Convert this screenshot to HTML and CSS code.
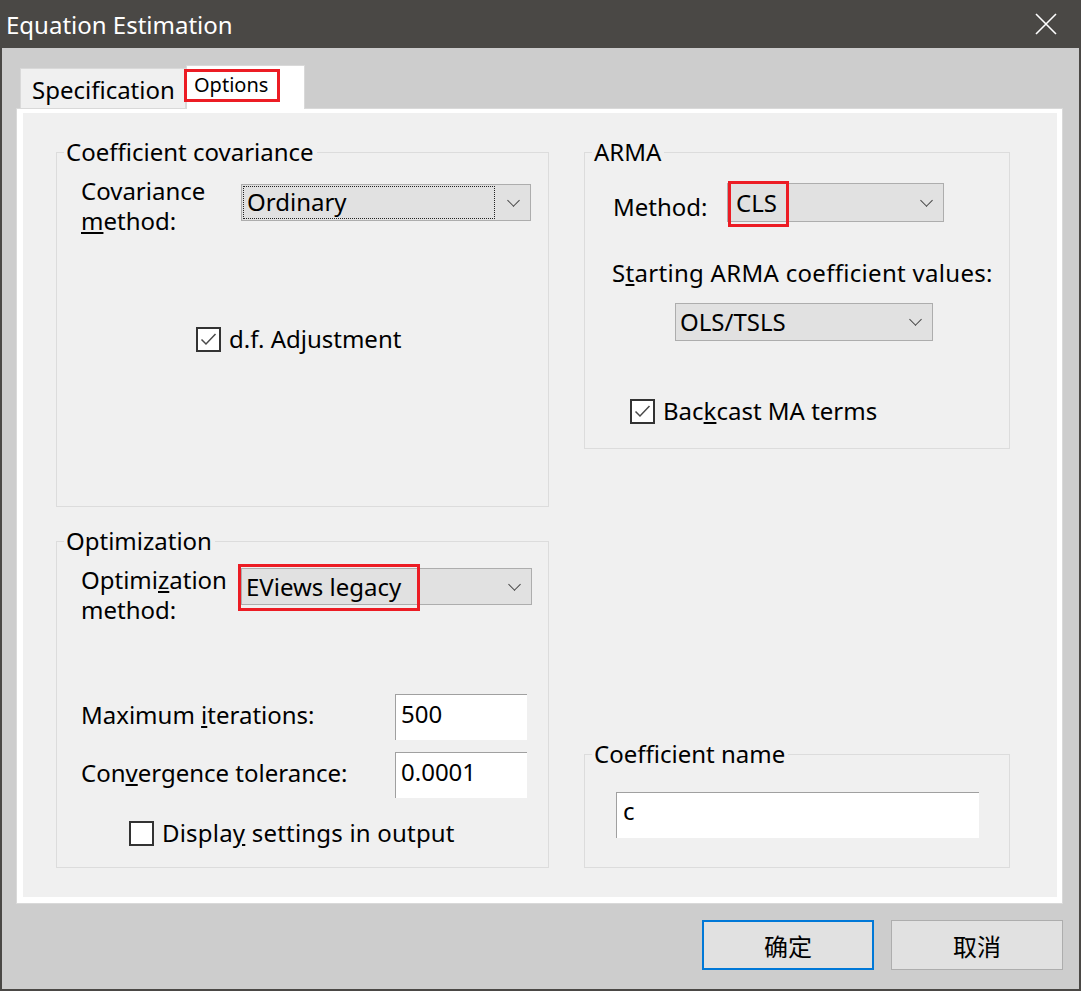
FILE: index.html
```html
<!DOCTYPE html>
<html>
<head>
<meta charset="utf-8">
<link rel="stylesheet" href="styles.css">
</head>
<body>
<div class="window">
  <div class="titlebar">
    <span class="title">Equation Estimation</span>
    <svg class="close" width="24" height="24" viewBox="0 0 24 24"><path d="M2 2 L22 22 M22 2 L2 22" stroke="#ffffff" stroke-width="1.6" fill="none"/></svg>
  </div>
  <div class="client">
    <div class="tabs">
      <div class="tab">Specification</div>
      <div class="tab active"><span class="tab-mark">Options</span></div>
    </div>
    <div class="panel">
      <div class="content">
        <div class="col">
          <fieldset class="group g-cov">
            <legend>Coefficient covariance</legend>
            <div class="row-top">
              <div class="lbl lbl-cov">Covariance<br><u>m</u>ethod:</div>
              <div class="combo combo-cov"><span class="focus">Ordinary</span><span class="chev"></span></div>
            </div>
            <div class="check check-df"><span class="box"><svg width="21" height="21" viewBox="0 0 21 21"><path d="M3.5 10.5 L8 15 L17.5 5" stroke="#4a4a4a" stroke-width="1.5" fill="none"/></svg></span><span>d.f. Adjustment</span></div>
          </fieldset>
          <fieldset class="group g-opt">
            <legend>Optimization</legend>
            <div class="row-top">
              <div class="lbl lbl-cov">Optimi<u>z</u>ation<br>method:</div>
              <div class="combo combo-opt"><span class="val">EViews legacy</span><span class="chev"></span><span class="mark mark-opt"></span></div>
            </div>
            <div class="field field-first"><span class="flbl">Maximum <u>i</u>terations:</span><span class="input">500</span></div>
            <div class="field"><span class="flbl">Con<u>v</u>ergence tolerance:</span><span class="input">0.0001</span></div>
            <div class="check check-disp"><span class="box"></span><span>Displa<u>y</u> settings in output</span></div>
          </fieldset>
        </div>
        <div class="col col-right">
          <fieldset class="group g-arma">
            <legend>ARMA</legend>
            <div class="row-method">
              <span class="lbl-method">Method:</span>
              <div class="combo combo-cls"><span class="val">CLS</span><span class="chev"></span><span class="mark mark-cls"></span></div>
            </div>
            <div class="lbl-start">S<u>t</u>arting ARMA coefficient values:</div>
            <div class="combo combo-ols"><span class="val">OLS/TSLS</span><span class="chev"></span></div>
            <div class="check check-back"><span class="box"><svg width="21" height="21" viewBox="0 0 21 21"><path d="M3.5 10.5 L8 15 L17.5 5" stroke="#4a4a4a" stroke-width="1.5" fill="none"/></svg></span><span>Bac<u>k</u>cast MA terms</span></div>
          </fieldset>
          <fieldset class="group g-name">
            <legend>Coef<u>f</u>icient name</legend>
            <span class="input input-name">c</span>
          </fieldset>
        </div>
      </div>
    </div>
    <div class="buttons">
      <div class="btn btn-default">确定</div>
      <div class="btn">取消</div>
    </div>
  </div>
</div>
</body>
</html>
```
FILE: styles.css
```css
* { box-sizing: border-box; }
html, body { margin: 0; padding: 0; }
body {
  width: 1081px;
  height: 991px;
  font-family: "Noto Sans", "Open Sans", "Noto Sans CJK SC", sans-serif;
  font-size: 24px;
  color: #000;
  overflow: hidden;
}
.window {
  width: 1081px;
  height: 991px;
  background: #4a4845;
  display: flex;
  flex-direction: column;
}
.titlebar {
  height: 48px;
  flex: none;
  display: flex;
  align-items: center;
  justify-content: space-between;
  padding: 0 23px 0 6px;
  color: #fff;
}
.title { font-size: 24px; }
.close { display: block; }
.client {
  flex: 1;
  margin: 0 2px 2px 2px;
  background: #cdcdcd;
  padding: 17px 16px 19px 14px;
  display: flex;
  flex-direction: column;
}
.tabs {
  display: flex;
  align-items: flex-end;
  height: 43px;
  margin-left: 4px;
  position: relative;
  z-index: 1;
}
.tab {
  height: 40px;
  width: 166px;
  background: #f0f0f0;
  border: 1px solid #d9d9d9;
  border-bottom: 0;
  font-size: 24px;
  padding-left: 11px;
  line-height: 41px;
}
.tab.active {
  height: 44px;
  width: 119px;
  margin-bottom: -1px;
  background: #fff;
  font-size: 20px;
  padding-left: 0;
  line-height: 1;
}
.tab-mark {
  display: inline-block;
  margin: 3px 0 0 -3px;
  width: 96px;
  height: 33px;
  border: 3px solid #ec1c24;
  padding: 0 0 0 7px;
  line-height: 25px;
}
.panel {
  height: 796px;
  background: #fff;
  border: 1px solid #d9d9d9;
  padding: 4px 5px 6px 6px;
}
.content {
  height: 100%;
  background: #f0f0f0;
  padding: 23px 47px 31px 33px;
  display: grid;
  grid-template-columns: 493px 426px;
  column-gap: 35px;
}
.col {
  display: flex;
  flex-direction: column;
  gap: 18px;
}
.col-right { justify-content: space-between; gap: 0; }
.group {
  margin: 0;
  border: 1px solid #dcdcdc;
  padding: 0;
  min-width: 0;
}
.group legend {
  margin-left: 7px;
  padding: 0 3px 0 2px;
  font-size: 24px;
  line-height: 32px;
}
.g-cov { height: 371px; padding-top: 8px; }
.g-opt { height: 343px; padding-top: 8px; }
.g-arma { height: 313px; padding-top: 15px; }
.g-name { height: 130px; padding: 22px 0 0 0; }

.row-top { display: flex; align-items: flex-start; padding-left: 24px; }
.lbl { line-height: 30px; }
.lbl-cov { width: 160px; }
.combo {
  position: relative;
  height: 37px;
  background: #e1e1e1;
  border: 1px solid #adadad;
  display: flex;
  align-items: center;
  padding-left: 4px;
}
.combo-cov { width: 290px; margin-top: 8px; padding-left: 1px; }
.combo-opt { width: 291px; margin-top: 3px; }
.focus {
  width: 252px;
  height: 33px;
  border: 1px dotted #222;
  padding-left: 3px;
  line-height: 30px;
}
.val { line-height: 30px; }
.chev {
  position: absolute;
  right: 12px;
  top: 50%;
  width: 9px;
  height: 9px;
  margin-top: -7px;
  border-right: 1px solid #444;
  border-bottom: 1px solid #444;
  transform: rotate(45deg);
}
.mark {
  position: absolute;
  border: 3px solid #ec1c24;
}
.mark-opt { left: -4px; top: -5px; width: 182px; height: 47px; }
.mark-cls { left: 0px; top: -3px; width: 61px; height: 46px; }

.check { display: flex; align-items: center; gap: 8px; line-height: 30px; }
.box {
  width: 25px;
  height: 25px;
  border: 2px solid #333;
  background: #fff;
  flex: none;
}
.box svg { display: block; }
.check-df { margin: 88px 0 0 139px; }
.check-disp { margin: 20px 0 0 72px; letter-spacing: 0.2px; }
.check-back { margin: 55px 0 0 45px; }

.field {
  display: flex;
  align-items: center;
  height: 46px;
  padding-left: 24px;
  margin-top: 12px;
}
.field-first { margin-top: 69px; }
.flbl { width: 314px; padding-bottom: 6px; }
.input {
  display: flex;
  align-items: center;
  width: 132px;
  height: 46px;
  background: #fff;
  border-top: 1px solid #a0a0a0;
  border-left: 1px solid #a0a0a0;
  padding: 0 0 8px 5px;
}
.input-name { width: 363px; padding-left: 6px; margin-left: 31px; padding-bottom: 10px; }

.row-method { display: flex; align-items: center; padding-left: 28px; height: 39px; }
.lbl-method { width: 114px; padding-top: 8px; }
.combo-cls { width: 217px; height: 39px; padding-left: 8px; }
.lbl-start { margin: 36px 0 0 27px; line-height: 30px; letter-spacing: 0.3px; }
.combo-ols { width: 258px; height: 38px; margin: 15px 0 0 90px; }

.buttons {
  margin-top: auto;
  display: flex;
  justify-content: flex-end;
  gap: 17px;
}
.btn {
  width: 172px;
  height: 50px;
  background: #e1e1e1;
  border: 1px solid #adadad;
  display: flex;
  align-items: center;
  justify-content: center;
  font-family: "Noto Sans CJK SC", sans-serif;
  font-size: 24px;
}
.btn-default { border: 2px solid #0078d7; }
```
